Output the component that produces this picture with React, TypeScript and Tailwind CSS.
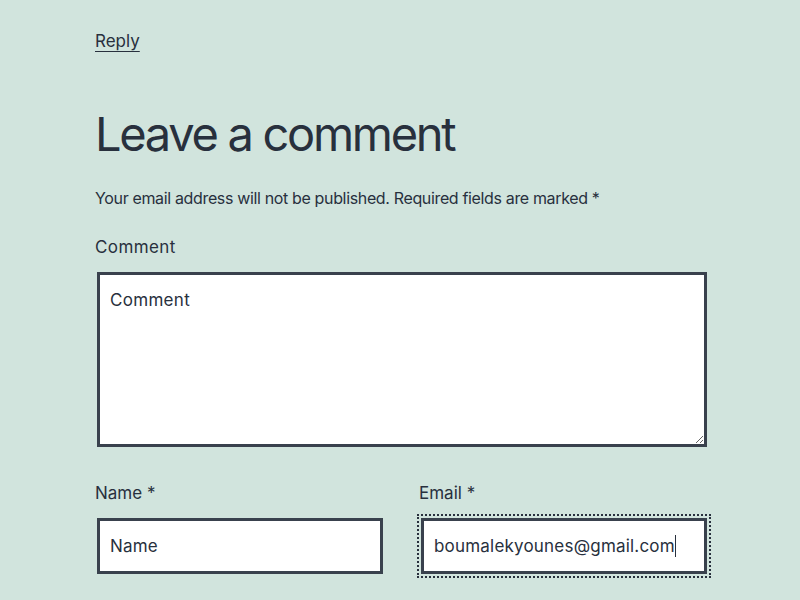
export default function App() {
  return (
    <div className="min-h-[600px] w-full bg-[#d1e4dd] font-['Inter',sans-serif] text-[#28303d]">
      <div className="ml-[95px] w-[612px] pt-[29px]">
        {/* Reply link */}
        <div className="text-[17px] leading-[24px]">
          <a href="#" className="underline decoration-1 underline-offset-[4px]">
            Reply
          </a>
        </div>

        {/* Comment form */}
        <h2 className="mt-[57px] text-[47px] leading-[48px] font-normal tracking-[-2.3px]">
          Leave a comment
        </h2>
        <p className="mt-[28px] text-[16px] leading-[24px] tracking-[-0.35px]">
          Your email address will not be published. Required fields are marked *
        </p>

        <label className="mt-[25px] block text-[17px] leading-[24px] tracking-[0.4px]">Comment</label>
        <textarea
          placeholder="Comment"
          className="mt-[13px] ml-[2px] block h-[175px] w-[610px] border-[3px] border-[#39414d] bg-white px-[10px] py-[10px] text-[17px] leading-[30px] tracking-[0.3px] text-[#28303d] placeholder:text-[#28303d] focus:outline-none"
        />

        <div className="mt-[34px] grid grid-cols-2 gap-[36px]">
          <div>
            <label className="block text-[17px] leading-[24px]">Name *</label>
            <input
              type="text"
              placeholder="Name"
              className="mt-[13px] ml-[2px] block h-[56px] w-[286px] border-[3px] border-[#39414d] bg-white px-[10px] text-[17px] leading-[30px] tracking-[0.2px] text-[#28303d] placeholder:text-[#28303d]"
            />
          </div>
          <div>
            <label className="block text-[17px] leading-[24px]">Email *</label>
            <div className="relative mt-[13px] ml-[2px] w-[286px]">
              <input
                type="email"
                defaultValue="boumalekyounes@gmail.com"
                className="block h-[56px] w-[286px] border-[3px] border-[#39414d] bg-white px-[10px] text-[17px] leading-[30px] tracking-[0.2px] text-[#28303d] outline-2 outline-offset-2 outline-dotted outline-[#28303d]"
              />
              <span className="absolute left-[254px] top-[17px] h-[22px] w-px bg-[#28303d]" />
            </div>
          </div>
        </div>
      </div>
    </div>
  );
}
